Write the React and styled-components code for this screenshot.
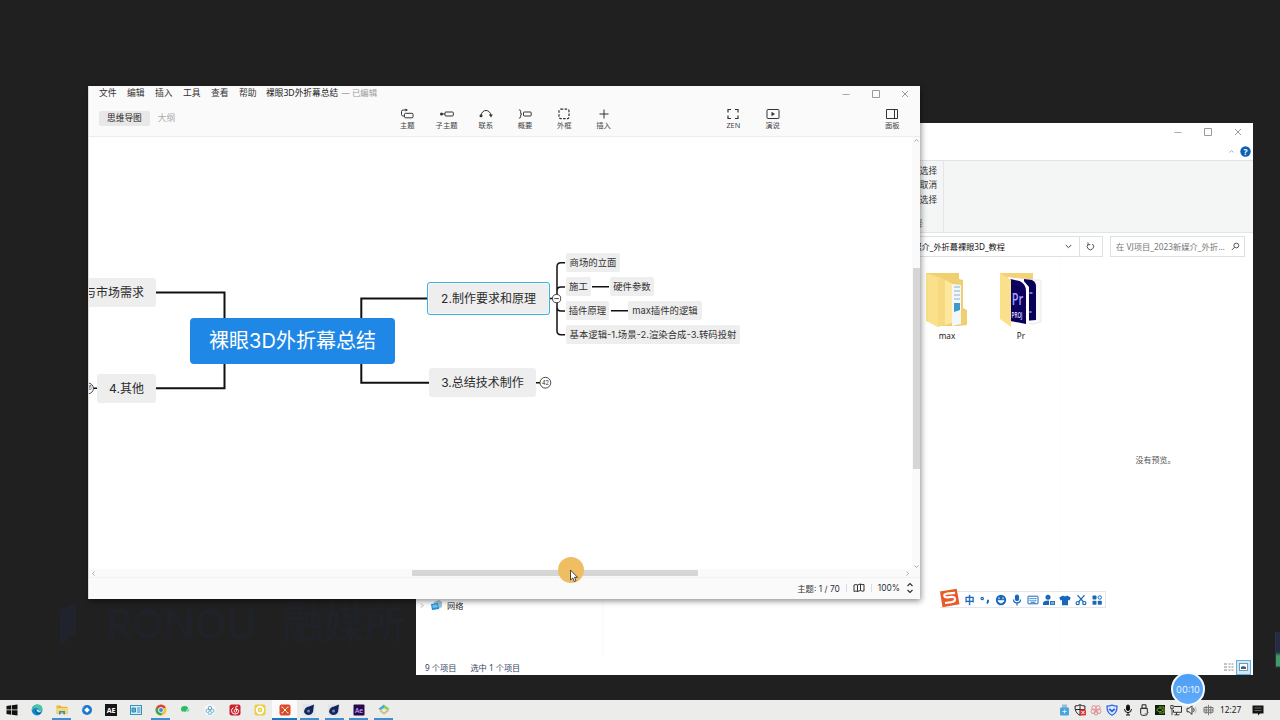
import React from 'react';
import styled, { createGlobalStyle, css } from 'styled-components';

const GlobalStyle = createGlobalStyle`
  * {
    box-sizing: border-box;
  }

  body {
    margin: 0;
    background: #202020;
    overflow: hidden;
    font-family: 'Noto Sans', 'Noto Sans CJK SC', sans-serif;
  }

  svg {
    display: block;
    flex: none;
  }
`;

const Desktop = styled.div`
  position: relative;
  width: 1280px;
  height: 720px;
  overflow: hidden;
  background: #202020;
  white-space: nowrap;
`;

const Wallpaper = styled.div`
  position: absolute;
  left: 56px;
  top: 598px;
  display: flex;
  align-items: center;
  gap: 26px;
  color: #20222a;
  font: 500 41px/44px Inter, 'Noto Sans CJK SC', sans-serif;
`;

const EdgeWidget = styled.div`
  position: absolute;
  left: 1275px;
  top: 632px;
  width: 5px;
  height: 36px;
  border-left: 1px solid #2c323e;
  background: linear-gradient(#252b42 0 20px, #3f9a67 24px 34px, #263036 35px);
`;

/* ---------- file explorer ---------- */

const Explorer = styled.section`
  position: absolute;
  left: 416px;
  top: 123px;
  width: 837px;
  height: 552px;
  display: flex;
  flex-direction: column;
  background: #fff;
  color: #222;
  font-size: 8.2px;
`;

const ExplorerTitle = styled.div`
  height: 18px;
  display: flex;
  justify-content: flex-end;
`;

const WindowButton = styled.div`
  width: ${(p) => p.$w || 30}px;
  height: 18px;
  display: flex;
  align-items: center;
  justify-content: center;
`;

const RibbonTabs = styled.div`
  height: 20px;
  display: flex;
  align-items: center;
  justify-content: flex-end;
  gap: 6px;
  padding: 1px 2px 0 0;
  border-bottom: 1px solid #dfe3e5;
`;

const Ribbon = styled.div`
  height: 72px;
  background: #f4f6f6;
  border-bottom: 1px solid #e2e4e5;
`;

const RibbonGroup = styled.div`
  width: 528px;
  height: 71px;
  padding: 2.5px 6px 0 0;
  border-right: 1px solid #e3e5e6;
  text-align: right;
  line-height: 14.7px;
  font-size: 8.6px;
  color: #333;
`;

const RibbonCaption = styled.div`
  margin-top: 9px;
  padding-right: 14px;
  line-height: 14px;
  color: #777;
`;

const AddressRow = styled.div`
  height: 27px;
  display: flex;
  align-items: flex-start;
  padding: 3px 8px 0 0;
`;

const AddressBox = styled.div`
  display: flex;
  align-items: center;
  justify-content: space-between;
  width: ${(p) => p.$w}px;
  height: 21px;
  padding: 0 7px 1px 5px;
  margin-left: ${(p) => p.$gap || 0}px;
  border: 1px solid #dfdfdf;
  border-left-width: ${(p) => (p.$joined ? 0 : 1)}px;
  color: ${(p) => p.$color || '#111'};
  font-size: 8.2px;
`;

const SearchBox = styled(AddressBox)`
  padding-right: 4px;
  font-size: 8.3px;
`;

const Path = styled.span`
  flex: 1;
  padding-right: 60px;
  text-align: right;
`;

const Files = styled.div`
  flex: 1;
  display: flex;
`;

const NavPane = styled.div`
  width: 187px;
  display: flex;
  align-items: flex-end;
  padding: 0 0 46px 4px;
  border-right: 1px solid #fafafa;
`;

const NavItem = styled.div`
  display: flex;
  align-items: center;
  gap: 4px;
  height: 16px;
  font-size: 8.2px;
`;

const NavIcon = styled.svg`
  margin-left: 2px;
`;

const FolderGrid = styled.div`
  width: 457px;
  display: flex;
  justify-content: flex-end;
  padding: 12px 1px 0 0;
  border-right: 1px solid #fbfbfb;
`;

const Folder = styled.div`
  width: 74px;
  display: flex;
  flex-direction: column;
  align-items: center;
  gap: 1px;
  line-height: 13px;
`;

const Preview = styled.div`
  flex: 1;
  padding: 194px 2px 0 0;
  text-align: center;
  color: #555;
  font-size: 8px;
  line-height: 12px;
`;

const ExplorerStatus = styled.div`
  height: 16px;
  display: flex;
  align-items: center;
  gap: 14px;
  padding: 0 2px 0 9px;
  color: #34435f;
  font-size: 8.2px;
`;

const ViewButtons = styled.div`
  margin-left: auto;
`;

/* ---------- mind map window ---------- */

const MindWindow = styled.section`
  position: absolute;
  left: 88px;
  top: 86px;
  width: 832px;
  height: 513px;
  display: flex;
  flex-direction: column;
  background: #fafafa;
  border-left: 1px solid #d9d9d9;
  box-shadow: 1px 2px 6px rgba(0, 0, 0, 0.45);
  color: #333;
`;

const MenuBar = styled.div`
  height: 16px;
  display: flex;
  align-items: center;
  padding-left: 10px;
  font-size: 8.8px;
  line-height: 12px;
`;

const MenuItem = styled.span`
  width: 28px;
  margin-top: -2px;
`;

const DocTitle = styled.span`
  margin: -2px 0 0 -1px;
  color: #222;
  font-size: 8.7px;

  small {
    margin-left: 1px;
    color: #999;
    font-size: 8.4px;
  }
`;

const MenuButtons = styled.div`
  display: flex;
  margin-left: auto;
`;

const ToolBar = styled.div`
  height: 35px;
  display: flex;
  border-bottom: 1px solid #ececec;
`;

const Tabs = styled.div`
  width: 298.7px;
  display: flex;
  align-items: flex-start;
  padding: 9px 0 0 10px;
`;

const Tab = styled.div`
  height: 15px;
  padding: 0 8px;
  border-radius: 2px;
  background: ${(p) => (p.$active ? '#e8e8e8' : 'transparent')};
  color: ${(p) => (p.$active ? '#222' : '#aaa')};
  font-size: 8.7px;
  line-height: 15px;
`;

const Tool = styled.div`
  width: 39.25px;
  margin-left: ${(p) => p.$gap || 0}px;
  padding-top: 6px;
  display: flex;
  flex-direction: column;
  align-items: center;
  color: #444;
  font-size: 7.3px;
  line-height: 11px;
`;

const Workspace = styled.div`
  flex: 1;
  display: flex;
  background: #fff;
`;

const Canvas = styled.div`
  position: relative;
  flex: 1;
  overflow: hidden;
`;

const Links = styled.svg`
  position: absolute;
  left: 0;
  top: 0;
`;

const topicKinds = {
  root: css`
    padding-bottom: 2px;
    background: #1f87e5;
    color: #fff;
    font-size: 20px;
    border-radius: 4px;
  `,
  main: css`
    padding-bottom: 1.5px;
    background: #eee;
    color: #2b2b2b;
    font-size: 12px;
    border-radius: 3px;
  `,
  sub: css`
    padding-bottom: 1.5px;
    background: #eee;
    color: #333;
    font-size: 9.4px;
    border-radius: 2px;
  `,
};

const Topic = styled.div`
  position: absolute;
  left: ${(p) => p.$x - 89}px;
  top: ${(p) => p.$y - 137}px;
  width: ${(p) => p.$w}px;
  height: ${(p) => p.$h}px;
  display: flex;
  align-items: center;
  justify-content: center;
  font-family: Inter, 'Noto Sans CJK SC', sans-serif;
  ${(p) => topicKinds[p.$kind]}
  ${(p) =>
    p.$selected &&
    css`
      border: 1.5px solid #35b3e3;
      box-shadow: inset 0 0 0 1px #f8f8f8;
    `}
`;

const VScroll = styled.div`
  width: 8px;
  display: flex;
  flex-direction: column;
  align-items: center;
  justify-content: space-between;
  background: #fafafa;
  padding: 1px 0 0;
`;

const VThumb = styled.div`
  width: 7px;
  height: 201px;
  margin-top: 30px;
  background: #d6d6d6;
`;

const HScroll = styled.div`
  height: 8px;
  display: flex;
  align-items: center;
  justify-content: space-between;
  padding: 0 10px 0 2px;
  background: #fafafa;
`;

const HThumb = styled.div`
  width: 286px;
  height: 6px;
  margin-left: 108px;
  border-radius: 1px;
  background: #d6d6d6;
`;

const StatusBar = styled.div`
  height: 22px;
  display: flex;
  align-items: center;
  justify-content: flex-end;
  gap: 6px;
  padding: 0 6px 2px 0;
  border-top: 1px solid #f2f2f2;
  font: 8.4px Inter, 'Noto Sans CJK SC', sans-serif;
`;

const Divider = styled.i`
  width: 1px;
  height: 8px;
  background: #ddd;
`;

/* ---------- overlays ---------- */

const ClickHalo = styled.div`
  position: absolute;
  left: 557.5px;
  top: 557px;
  width: 26px;
  height: 26px;
  border-radius: 50%;
  background: #efbd62;
`;

const Pointer = styled.svg`
  position: absolute;
  left: 569px;
  top: 569px;
`;

const ImeBar = styled.div`
  position: absolute;
  left: 940px;
  top: 591px;
  width: 166px;
  height: 17px;
  display: flex;
  align-items: center;
  background: #fff;
  border: 1px solid #e3e6ea;
  border-left: 0;
  color: #1668bd;
  font: 700 10px/14px 'Noto Sans CJK SC', sans-serif;
`;

const ImeCell = styled.div`
  width: 16px;
  display: flex;
  justify-content: center;
`;

const SogouMark = styled.svg`
  margin: -3px 1.5px 0 -1px;
`;

const TaskBar = styled.footer`
  position: absolute;
  left: 0;
  bottom: 0;
  width: 1280px;
  height: 20px;
  display: flex;
  background: #ececea;
`;

const TaskItem = styled.div`
  width: 24.75px;
  height: 20px;
  display: flex;
  align-items: center;
  justify-content: center;
  background: ${(p) => (p.$focused ? '#fafafa' : 'transparent')};
  box-shadow: ${(p) => (p.$focused ? 'inset 0 -2px #1778c8' : 'none')};

  &::after {
    content: '';
    position: absolute;
    bottom: 0;
    width: ${(p) => (p.$open ? 19 : 0)}px;
    height: 2px;
    background: #3c8fd2;
  }
`;

const Tray = styled.div`
  display: flex;
  align-items: center;
  margin-left: auto;
  padding-right: 15px;
  color: #222;
`;

const TrayCell = styled.div`
  width: 16px;
  display: flex;
  justify-content: center;
`;

const Clock = styled.span`
  width: 21px;
  margin: 0 10px 0 4px;
  font-size: 8.3px;
  line-height: 12px;
`;

const Recorder = styled.div`
  position: absolute;
  left: 1171px;
  top: 672px;
  width: 34px;
  height: 34px;
  border: 2px solid #f4faff;
  border-radius: 50%;
  background: linear-gradient(#4c9df4, #62acfa);
  color: #e6f2ff;
  font: 9.2px/31px Inter, sans-serif;
  text-align: center;
`;

const Stroke = ({ w = 14, h = 12, color = '#333', width = 1, children }) => (
  <svg width={w} height={h} viewBox={`0 0 ${w} ${h}`} fill="none" stroke={color} strokeWidth={width}>
    {children}
  </svg>
);

const Minimize = () => <Stroke w={8} h={8} color="#aaa"><path d="M0.5 4.5h7" /></Stroke>;
const Maximize = () => <Stroke w={8} h={8} color="#999"><path d="M.5 .5h7v7h-7z" /></Stroke>;
const Close = () => <Stroke w={8} h={8} color="#999"><path d="M1 1l6 6M7 1l-6 6" /></Stroke>;

const Chevron = ({ d, w = 5, h = 5, color = '#aaa' }) => (
  <Stroke w={w} h={h} color={color}><path d={d} /></Stroke>
);

const tools = [
  ['主题', <><path d="M6.5 2H3.2a1.7 1.7 0 0 0-1.7 1.7v2.600a1.700 1.700 0 0 0 1.700 1.700H4.500" /><rect x="4.5" y="5.300" width="8.500" height="4.500" rx="1" /><path d="M5.500 .5L8 2 5.500 3.500z" fill="#333" stroke="none" /></>],
  ['子主题', <><circle cx="1.500" cy="6" r="1.500" fill="#333" stroke="none" /><path d="M2 6h3" /><rect x="5" y="4" width="8.300" height="4" rx=".8" /></>],
  ['联系', <><path d="M2 7.500C3 .8 11 .8 12 7.500" /><circle cx="2" cy="7.800" r="1.500" fill="#333" stroke="none" /><path d="M9.800 6.500h4l-1.800 3z" fill="#333" stroke="none" /></>],
  ['概要', <><path d="M.8 2h.7q1.200 0 1.200 1.200V5q0 1 1 1-1 0-1 1v1.800Q2.700 10 1.500 10H.8" /><rect x="5.500" y="4" width="7.700" height="4" rx=".8" /></>],
  ['外框', <rect x="2" y="1.200" width="10" height="9.500" rx="1.800" strokeDasharray="2.500 1.300" strokeWidth="1.200" />],
  ['插入', <path d="M7 1.500v9M2.500 6h9" />],
  ['ZEN', <path d="M5 1.500H2v3M9 1.500h3v3M2 7.500v3h3M12 7.500v3H9" strokeWidth="1.200" />],
  ['演说', <><rect x="1" y="1.500" width="12" height="9" rx=".8" /><path d="M5.500 3.800L9 6 5.500 8.200z" fill="#333" stroke="none" /></>],
  ['面板', <path d="M1.500 1.500h11v9h-11zM9.500 1.500v9" />],
];
const toolGaps = { 6: 90.5, 8: 80.5 };

const topics = [
  { kind: 'main', x: 72, y: 278, w: 84, h: 29, text: '与市场需求' },
  { kind: 'main', x: 97, y: 374, w: 59, h: 29, text: '4.其他' },
  { kind: 'root', x: 190, y: 317.5, w: 205, h: 46.5, text: '裸眼3D外折幕总结' },
  { kind: 'main', x: 427, y: 282, w: 123, h: 33, text: '2.制作要求和原理', selected: true },
  { kind: 'main', x: 429, y: 368, w: 107, h: 29, text: '3.总结技术制作' },
  { kind: 'sub', x: 566, y: 253, w: 54, h: 19, text: '商场的立面' },
  { kind: 'sub', x: 566, y: 277, w: 25, h: 19, text: '施工' },
  { kind: 'sub', x: 610, y: 277, w: 44, h: 19, text: '硬件参数' },
  { kind: 'sub', x: 566, y: 301, w: 43, h: 19, text: '插件原理' },
  { kind: 'sub', x: 628, y: 301, w: 74, h: 19, text: 'max插件的逻辑' },
  { kind: 'sub', x: 566, y: 325, w: 174, h: 19, text: '基本逻辑-1.场景-2.渲染合成-3.转码投射' },
];

const TopicLinks = () => (
  <Links width="823" height="432" viewBox="89 137 823 432" fill="none" stroke="#111" strokeWidth="2">
    <path d="M156 292.5h68.5V319M156 388.3h68.5V363M428 298.5h-66.7V319M429 382.7h-67.7V363" />
    <g strokeWidth="1.5">
      <path d="M549 298.6h4M536 382.7h4M93 388.3h4" />
      <path d="M565 262.7h-4q-4 0-4 4v64q0 4 4 4h4M557 293v-2q0-4 4-4h4M557 304v3q0 4 4 4h4" />
      <path d="M592 286.7h17M611 310.7h17" />
    </g>
    <g strokeWidth=".9" stroke="#333" fill="#fff">
      <circle cx="556.6" cy="298.6" r="4.1" />
      <path d="M554.3 298.6h4.6" />
      <circle cx="545.4" cy="382.7" r="5.4" />
      <circle cx="88" cy="388.4" r="5.4" />
    </g>
    <g fill="#333" stroke="none" fontFamily="Inter, sans-serif" fontSize="5.6" textAnchor="middle">
      <text x="545.4" y="384.8">42</text>
      <text x="88.4" y="390.4">26</text>
    </g>
  </Links>
);

const MaxFolder = () => (
  <svg width="44" height="56" viewBox="0 0 44 56">
    <path d="M1 1h33v6l4 1v28l4 2v15l-9 1H10z" fill="#f0cf70" />
    <path d="M27 12l9 1v39l-9 2z" fill="#f4f7f9" />
    <path d="M29 15h6M29 19h6M29 23h6M29 27h6" stroke="#a7c9e3" strokeWidth="1.4" />
    <path d="M29 31h6v7l-6 2z" fill="#3c9bcc" />
    <path d="M1 1l12 4v50L1 49z" fill="#fbe08b" />
    <path d="M13 4l14 7v40l-14 4z" fill="#f7d981" />
    <path d="M20 8l7 4v39l-7 2z" fill="#fce79d" />
  </svg>
);

const PrFolder = () => (
  <svg width="44" height="56" viewBox="0 0 44 56">
    <path d="M1 1h33v8H1z" fill="#f3d376" />
    <path d="M16 6l21 2h5v42l-8 2-18-2z" fill="#fafafd" stroke="#dcdce6" strokeWidth=".6" />
    <path d="M25 7l8 1q4 2 4 6v34l-12 1z" fill="#090058" />
    <path d="M9 5l14 2 7 8v39l-19-3z" fill="#fff" />
    <path d="M11.500 7l9 2q6.500 3 6.500 10v33l-15.500-3z" fill="#0b005e" />
    <g fontFamily="Open Sans, sans-serif" fontWeight="600">
      <text x="12.800" y="33" fontSize="16" fill="#a3a1ff" textLength="11.500" lengthAdjust="spacingAndGlyphs">Pr</text>
      <text x="12.500" y="46" fontSize="8" fill="#dddcff" textLength="11" lengthAdjust="spacingAndGlyphs">PROJ</text>
    </g>
    <path d="M30.500 21h3M30.500 40h2" stroke="#9b99ee" strokeWidth="1.500" />
    <path d="M1 1l11 7v47L1 47z" fill="#fbe08b" />
  </svg>
);

const imeIcons = [
  '中',
  <Stroke w={12} h={12} color="#1668bd" width={1.2}><circle cx="3.2" cy="4.5" r="1.2" /><path d="M8 6.6h1v1.2L8 9.4" strokeWidth="1.8" /></Stroke>,
  <svg width="12" height="12"><circle cx="6" cy="6" r="5.2" fill="#1668bd" /><path d="M4 3.4v1.8M8 3.4v1.8M3 6.8q3 4.3 6 0z" stroke="#fff" fill="#fff" /></svg>,
  <Stroke w={12} h={12} color="#1668bd" width={1.2}><rect x="4.5" y="1" width="3" height="5.6" rx="1.5" fill="#1668bd" /><path d="M2.5 5.5q0 3.4 3.5 3.4t3.5-3.4M6 9v2.4" /></Stroke>,
  <Stroke w={12} h={12} color="#1668bd"><rect x="1" y="2.2" width="10" height="7.6" rx=".5" /><path d="M2.5 4.5h7M2.5 6.3h7" strokeDasharray="1.2 .7" /><path d="M3.5 8.2h5" /></Stroke>,
  <svg width="12" height="12" fill="#1668bd"><circle cx="5" cy="3.3" r="2.5" /><path d="M0 11V8.5Q1 6.5 5 6.5h1V11z" /><path d="M7 7h5v4H7z" /><path d="M7.8 8.3h3.4M7.8 9.8h3.4" stroke="#fff" strokeWidth=".6" /></svg>,
  <svg width="12" height="12" fill="#1668bd"><path d="M4 1.4q2 1.7 4 0l3.7 2-1.2 3L9 6v5.2H3V6l-1.5.4-1.2-3z" /></svg>,
  <Stroke w={12} h={12} color="#1668bd" width={1.2}><path d="M2.5 1.2l6 6.8M9.5 1.2l-6 6.8" /><circle cx="2.7" cy="9.1" r="1.6" /><circle cx="9.3" cy="9.1" r="1.6" /></Stroke>,
  <svg width="12" height="12" fill="#1668bd"><rect x="1.500" y="1.500" width="4" height="4" rx=".8" /><circle cx="8.800" cy="3.500" r="1.700" fill="none" stroke="#1668bd" /><rect x="1.500" y="6.800" width="4" height="4" rx=".8" /><rect x="6.800" y="6.800" width="4" height="4" rx=".8" /></svg>,
];

const SogouLogo = () => (
  <SogouMark width="21" height="20" viewBox="0 0 21 20">
    <path d="M1 3.4L17.7.8l2.8 15.5-17 2.9z" fill="#ea5a27" />
    <path d="M16 4.8l-8.200.9Q4.700 6.400 5.300 8q.4 1.600 3.400 1.300l4-.4q3.500-.2 3.300 2.600-.2 2.200-3.500 2.700L6 15" fill="none" stroke="#fff" strokeWidth="2.200" />
  </SogouMark>
);

const Planet = () => (
  <svg width="12" height="12"><rect width="12" height="12" rx="2" fill="#dfe5ea" /><path d="M1 8Q1.500 3 6 2.500L11 .5 10 8q-1.500 3-4.500 3T1 8z" fill="#15255a" /><circle cx="5.500" cy="7" r="1.500" fill="#6f86c0" /></svg>
);

const tasks = [
  { icon: <svg width="12" height="12" fill="#111"><path d="M.5 2l4.8-.7v4.300H.5zM6 1.200L11.500.5v5.100H6zM.5 6.300h4.800v4.400L.5 10zM6 6.300h5.500v5.200L6 10.800z" /></svg> },
  { icon: <svg width="12" height="12"><circle cx="6" cy="6" r="5.4" fill="#1684c9" /><path d="M1 4.500Q3 .5 6.500.6q5 .2 5 4.800 0 2-3.200 2.100Q8 4 5 4 2 4 1 7z" fill="#42c6a4" /><path d="M4.500 6q0 4 5 3.500" stroke="#0c4f93" fill="none" /><path d="M5.500 6.200q.4-1.400 2 0 .8 1.600 3 1.200-3 2-5-1.200" fill="#ececea" /></svg> },
  { open: true, icon: <svg width="12" height="12"><path d="M.5 1.500h4l1 1.300h6V10H.5z" fill="#e8b43e" /><path d="M.5 4h11v5.500H.5z" fill="#f8d775" /><path d="M3 10.500V7h6v3.500H7.300V8.600H4.700v1.900z" fill="#338fd0" /></svg> },
  { icon: <svg width="12" height="12"><circle cx="6" cy="6" r="5" fill="#1976d1" /><path d="M6 3.200l2.800 2.800L6 8.800 3.200 6z" fill="#fff" /><path d="M1 6l2-4" stroke="#64b9f5" /></svg> },
  { icon: <svg width="12" height="12"><rect width="12" height="12" fill="#161616" /><text x="6" y="8.600" fill="#fff" fontSize="7" fontWeight="700" fontFamily="Open Sans, sans-serif" textAnchor="middle">AE</text></svg> },
  { icon: <svg width="12" height="12"><rect x=".5" y="1.500" width="11" height="9" fill="#d8f0fa" stroke="#3592bd" /><path d="M2 4h3.500v4H2zM7 4h3.500M7 6h3.500M7 8h3.500" stroke="#358bb8" fill="#55b3d6" /></svg> },
  { open: true, icon: <svg width="12" height="12"><circle cx="6" cy="6" r="5.500" fill="#f3c52c" /><path d="M6 6L1.200 3.300Q2.700.5 6 .5q3.400 0 4.800 2.700z" fill="#df4334" /><path d="M6 6L1.200 3.300Q-.5 7 2 9.800 3.700 11.500 6 11.500L8 7z" fill="#3ca553" /><circle cx="6" cy="6" r="2.500" fill="#4086e7" stroke="#fff" strokeWidth=".9" /></svg> },
  { icon: <svg width="12" height="12"><path d="M1 5Q1 2 4.600 2 8 2 8.300 4.500 7 5 6 7.400q-1.200.5-3-.1l-1.200.7V7Q1 6.500 1 5z" fill="#28bc67" /><path d="M6.500 7.300Q7 5 10 5.300L8 8z" fill="#78dca0" /></svg> },
  { icon: <svg width="12" height="12" fill="none" stroke="#72aacb"><circle cx="6" cy="6" r="5.800" fill="#f5fafe" stroke="none" /><circle cx="6" cy="4" r="1.700" /><circle cx="3.700" cy="6.800" r="1.700" /><circle cx="8.300" cy="6.800" r="1.700" /><path d="M4 10h4" /></svg> },
  { icon: <svg width="12" height="12"><rect x=".5" y=".5" width="11" height="11" rx="2" fill="#ce202d" /><path d="M8.800 2.300q-2-.8-2 1l.8 4q-.8 1.700-2.200.5-.9-1.600 1.100-2.600 3.400-.4 3.200 2-.3 2.900-3.700 2.900-3.500-.2-3.500-3.400 0-2 2-3" stroke="#fff" fill="none" /></svg> },
  { icon: <svg width="12" height="12"><rect x=".5" y=".5" width="11" height="11" rx="2" fill="#eace49" /><circle cx="6" cy="6" r="3.300" fill="none" stroke="#fff" strokeWidth="1.700" /><circle cx="6" cy="6" r="1.300" fill="#f8e68a" /></svg> },
  { focused: true, icon: <svg width="12" height="12"><rect x=".5" y=".5" width="11" height="11" rx="2" fill="#dd4a29" /><path d="M2.500 3q1.500 0 2 1.500L6 6l1.500-1.500Q8 3 9.500 3M2.500 9q1.500 0 2-1.500L6 6l1.500 1.500Q8 9 9.500 9" stroke="#fff" fill="none" /></svg> },
  { open: true, icon: <Planet /> },
  { open: true, icon: <Planet /> },
  { open: true, icon: <svg width="12" height="12"><rect x=".5" y=".5" width="11" height="11" rx="1" fill="#28084c" /><text x="6" y="8.500" fill="#c9a4ff" fontSize="6.500" fontFamily="Open Sans, sans-serif" fontWeight="600" textAnchor="middle">Ae</text></svg> },
  { open: true, icon: <svg width="12" height="12"><path d="M6 .5L11.500 5 6 9 .5 5z" fill="#8bc864" /><path d="M.5 5L6 .5V6z" fill="#4ba9cf" /><path d="M1.500 7L6 10.800 11 7 8 5z" fill="#e8b576" /><path d="M3 6l3 2.500L9 6 6 4z" fill="#d9f1e9" /></svg> },
];

const trayIcons = [
  <svg width="11" height="12"><path d="M3 .5h5V4H3z" fill="#91bfdc" /><rect x="1" y="3.500" width="9" height="8" rx="1" fill="#4aa5dc" /><path d="M3.500 7.500h4M5.500 5.700v3.600" stroke="#d3efff" /></svg>,
  <svg width="12" height="12"><path d="M1 2q3 0 5-1.400Q8 2 11 2q.4 6.700-5 9.400Q.6 8.700 1 2z" fill="#eee" stroke="#222" /><path d="M6 1v10M1.300 5.500h9.400" stroke="#222" /><rect x="6" y="5.500" width="6" height="6" rx="1" fill="#e23437" /><path d="M7.500 7l3 3M10.500 7l-3 3" stroke="#fff" /></svg>,
  <svg width="12" height="12" fill="none" stroke="#e28b94"><circle cx="4" cy="3.800" r="2.200" /><circle cx="8" cy="3.800" r="2.200" /><circle cx="3.300" cy="7.400" r="2.200" /><circle cx="8.700" cy="7.400" r="2.200" /><circle cx="6" cy="9" r="2" /></svg>,
  <svg width="12" height="12"><path d="M1 2.200q3 0 5-1.200 2 1.200 5 1.200.2 6.800-5 9Q.8 9 1 2.200z" fill="#dce9ff" stroke="#2860de" strokeWidth="1.200" /><path d="M3.300 4.800L6 7.300l2.700-2.500" stroke="#2860de" strokeWidth="1.800" fill="none" /></svg>,
  <svg width="10" height="12" stroke="#111" fill="none"><rect x="3.500" y="1" width="3" height="5.500" rx="1.500" fill="#111" /><path d="M1.500 5q0 3.600 3.500 3.600T8.500 5M5 8.500V11M3 11h4" /></svg>,
  <svg width="10" height="12" stroke="#222" fill="none"><path d="M3 .8h4v3.500H3zM1.700 4.300h6.600v5.200q0 1.800-1.800 1.800h-3q-1.800 0-1.800-1.800z" /><path d="M6 9.200l1.200 1.200L9.500 8" stroke="#666" /></svg>,
  <svg width="12" height="12"><rect x="1" y="1" width="10" height="10" fill="#101d08" /><path d="M2.500 6q3-4 6.500 0-3 3.500-6.500 0zM5 3h5v6H5" stroke="#72a52d" fill="none" /></svg>,
  <svg width="12" height="12" fill="none" stroke="#333"><path d="M4 2.500h7.500v5.800H3.500V6M6.500 8.500v2.200M4.500 10.800h5" /><path d="M.8 1.500h2.400v3.200H.8zM2 4.700v6.500" strokeWidth=".9" /></svg>,
  <svg width="12" height="12" fill="none" stroke="#333"><path d="M1 4.300h2L6 1.600v8.800L3 7.800H1zM7.500 4.200q1.400 1.800 0 3.600" /><path d="M9 2.800q2.500 3.200 0 6.400" stroke="#bbb" /></svg>,
  <svg width="11" height="12" fill="none" stroke="#777"><path d="M5.500.8v10.400M3.200 2v8M7.800 2v8M1 3.500h9v4.800H1zM1 6h9" /></svg>,
];

const ExplorerWindow = () => (
  <Explorer>
    <ExplorerTitle>
      <WindowButton><Minimize /></WindowButton>
      <WindowButton><Maximize /></WindowButton>
      <WindowButton><Close /></WindowButton>
    </ExplorerTitle>
    <RibbonTabs>
      <Chevron d="M.5 3.5l2-2 2 2" />
      <svg width="11" height="11">
        <circle cx="5.5" cy="5.5" r="5.2" fill="#0b62b5" />
        <text x="5.5" y="8.6" fill="#fff" fontSize="8.5" fontWeight="700" textAnchor="middle">?</text>
      </svg>
    </RibbonTabs>
    <Ribbon>
      <RibbonGroup>
        <div>全部选择</div>
        <div>全部取消</div>
        <div>反向选择</div>
        <RibbonCaption>选择</RibbonCaption>
      </RibbonGroup>
    </Ribbon>
    <AddressRow>
      <AddressBox $w={664}>
        <Path>VJ项目_2023新媒介_外折幕裸眼3D_教程</Path>
        <Chevron d="M.8 2l2.7 2.7L6.2 2" w={7} h={7} color="#444" />
      </AddressBox>
      <AddressBox $w={23} $joined>
        <Stroke w={11} h={11} color="#555"><path d="M3.2 3.2a3.2 3.2 0 1 0 4.2-.2M3 1.5v2.2h2.3" /></Stroke>
      </AddressBox>
      <SearchBox $w={135} $gap={7} $color="#777">
        在 VJ项目_2023新媒介_外折...
        <Stroke w={9} h={9} color="#555"><circle cx="5.3" cy="3.5" r="2.4" /><path d="M3.6 5.2L.8 8" /></Stroke>
      </SearchBox>
    </AddressRow>
    <Files>
      <NavPane>
        <NavItem>
          <Chevron d="M1 .5l2 2-2 2" />
          <NavIcon width="12" height="11"><path d="M3 2l5-2 3 2v5L7 9 3 7z" fill="#9bc6dc" /><path d="M0 4l7-1 1 6-7 1z" fill="#248dce" /><path d="M1.2 5l5-.7.6 3-5 .7z" fill="#6bc3f0" /></NavIcon>
          网络
        </NavItem>
      </NavPane>
      <FolderGrid>
        <Folder><MaxFolder />max</Folder>
        <Folder><PrFolder />Pr</Folder>
      </FolderGrid>
      <Preview>没有预览。</Preview>
    </Files>
    <ExplorerStatus>
      <span>9 个项目</span>
      <span>选中 1 个项目</span>
      <ViewButtons>
        <svg width="28" height="15">
          <path d="M1 4h3M1 7h3M1 10h3M5.5 4h2M5.5 7h2M5.5 10h2M8.5 4h2M8.5 7h2M8.5 10h2" stroke="#888" />
          <rect x="13.5" y=".5" width="14" height="14" fill="#cde8f8" stroke="#62b1dc" />
          <rect x="16.5" y="3.5" width="8" height="7" fill="#fff" stroke="#8097a5" />
          <path d="M18 9V7l2-1 3 1v2z" fill="#38627f" />
        </svg>
      </ViewButtons>
    </ExplorerStatus>
  </Explorer>
);

const MindMapWindow = () => (
  <MindWindow>
    <MenuBar>
      {['文件', '编辑', '插入', '工具', '查看', '帮助'].map((m) => (
        <MenuItem key={m}>{m}</MenuItem>
      ))}
      <DocTitle>裸眼3D外折幕总结 <small>— 已编辑</small></DocTitle>
      <MenuButtons>
        <WindowButton $w={29.5}><Minimize /></WindowButton>
        <WindowButton $w={29.5}><Maximize /></WindowButton>
        <WindowButton $w={29.5}><Close /></WindowButton>
      </MenuButtons>
    </MenuBar>
    <ToolBar>
      <Tabs>
        <Tab $active>思维导图</Tab>
        <Tab>大纲</Tab>
      </Tabs>
      {tools.map(([label, icon], i) => (
        <Tool key={label} $gap={toolGaps[i]}>
          <Stroke>{icon}</Stroke>
          {label}
        </Tool>
      ))}
    </ToolBar>
    <Workspace>
      <Canvas>
        <TopicLinks />
        {topics.map((t) => (
          <Topic key={t.text} $kind={t.kind} $x={t.x} $y={t.y} $w={t.w} $h={t.h} $selected={t.selected}>
            {t.text}
          </Topic>
        ))}
      </Canvas>
      <VScroll>
        <Chevron d="M.5 3.5l2-2 2 2" />
        <VThumb />
        <Chevron d="M.5 1.5l2 2 2-2" />
      </VScroll>
    </Workspace>
    <HScroll>
      <Chevron d="M3.5 .5l-2 2 2 2" />
      <HThumb />
      <Chevron d="M1.5 .5l2 2-2 2" />
    </HScroll>
    <StatusBar>
      <span>主题: 1 / 70</span>
      <Divider />
      <Stroke w={12} h={10}><path d="M1 2q2-1 3.5 0v6.5Q3 7.5 1 8.5zM4.5 2L7.5 1v6.5l-3 1M7.5 1q1.5 1 3.5.5V8q-2 .5-3.5-.5" /></Stroke>
      <Divider />
      <span>100%</span>
      <Stroke w={8} h={12}><path d="M1.5 4L4 1.5 6.5 4M1.5 8L4 10.5 6.5 8" strokeWidth="1.2" /></Stroke>
    </StatusBar>
  </MindWindow>
);

const App = () => (
  <>
    <GlobalStyle />
    <Desktop>
      <Wallpaper>
        <svg width="24" height="52"><path d="M4 12L20 3v32L4 49z" fill="#20232b" /></svg>
        <span>RONOU</span>
        <span>融媒所</span>
      </Wallpaper>
      <EdgeWidget />
      <ExplorerWindow />
      <MindMapWindow />
      <ImeBar>
        <SogouLogo />
        {imeIcons.map((icon, i) => (
          <ImeCell key={i}>{icon}</ImeCell>
        ))}
      </ImeBar>
      <ClickHalo />
      <Pointer width="10" height="14" viewBox="0 0 10 14">
        <path d="M1.5 1v10l2.3-2 1.5 3.5 1.7-.8L5.5 8.3h3z" fill="#fff" stroke="#222" strokeWidth=".8" />
      </Pointer>
      <TaskBar>
        {tasks.map((t, i) => (
          <TaskItem key={i} $open={t.open} $focused={t.focused}>{t.icon}</TaskItem>
        ))}
        <Tray>
          {trayIcons.map((icon, i) => (
            <TrayCell key={i}>{icon}</TrayCell>
          ))}
          <Clock>12:27</Clock>
          <svg width="14" height="12"><path d="M1.5 1.5h11v8H9l-2 2v-2H1.5z" fill="#151515" /><path d="M3.5 4h7M3.5 6.5h7" stroke="#888" strokeWidth=".7" /></svg>
        </Tray>
      </TaskBar>
      <Recorder>00:10</Recorder>
    </Desktop>
  </>
);

export default App;
